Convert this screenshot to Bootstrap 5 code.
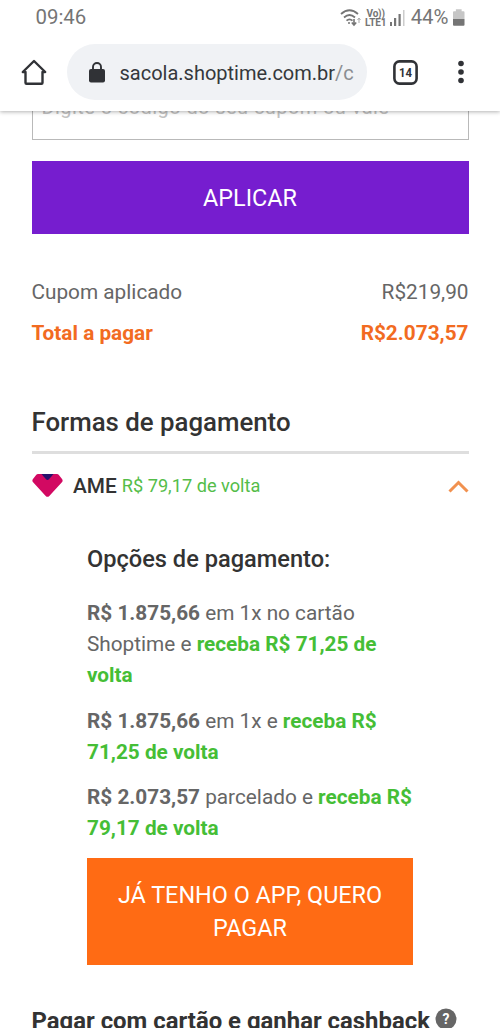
<!DOCTYPE html>
<html lang="pt-BR">
<head>
<meta charset="utf-8">
<meta name="viewport" content="width=device-width, initial-scale=1">
<title>Sacola - Shoptime</title>
<link href="https://cdn.jsdelivr.net/npm/bootstrap@5.3.0/dist/css/bootstrap.min.css" rel="stylesheet">
<style>
body{font-family:Roboto,"Liberation Sans",sans-serif;color:#666;height:1028px;overflow:hidden;background:#fff}
.topo{height:111px;z-index:5;box-shadow:0 1px 4px rgba(0,0,0,.3)}
.status{height:35px;padding:0 34px 0 35.5px;color:#757575;font-size:20.4px;line-height:35px}
.volte{font-size:10px;line-height:9px;font-weight:700;width:22px;letter-spacing:-.2px}
.barra{height:74px;padding:0 31px 0 20.5px}
.endereco{width:300px;height:56px;background:#f0f2f5;font-size:20px;line-height:32px;color:#35383c;margin-left:20.5px;padding-left:22px}
.endereco i{font-style:normal;color:#8b8e92}
.conteudo{width:437px;margin-left:31.5px}
.cupom{height:75px;margin-top:-46px;border:1.5px solid #b9b9b9;padding:0 9px;font-size:20px;letter-spacing:.42px;color:#c2c2c2;line-height:82px;white-space:nowrap}
.acao{border:0;border-radius:0;color:#fff;font-size:23.4px;line-height:33px}
.acao:hover{color:#fff}
.roxo,.roxo:hover{background:#761dcf;height:73px;margin-top:21px;padding-top:7px}
.laranja,.laranja:hover{background:#ff6b14;height:107px;margin-top:-1px;padding-top:8px}
.linha{font-size:20.78px;line-height:42px}
.total{color:#f26b21;font-weight:700;line-height:41px}
.titulo{font-size:25.8px;line-height:30px;color:#333;font-weight:500;margin:53px 0 14px}
.regua{height:3px;background:#dedede}
.ame{font-size:20.8px;color:#333;font-weight:500;height:64px}
.opcoes{width:326px;margin-left:55.5px}
.sub{font-size:23.6px;line-height:30px;font-weight:500;color:#333;margin:26px 0 24px}
.opcao{font-size:20.78px;line-height:31px;margin:0 0 14.6px;white-space:nowrap}
.opcao b{color:#666}
.opcao .verde{color:#45be36}
.verde{color:#54bd49}
.cash{font-size:23.9px;line-height:30px;font-weight:700;color:#333;margin-top:41px;white-space:nowrap}
</style>
</head>
<body>
<header class="topo bg-white position-relative">
  <div class="status d-flex align-items-center">
    <span>09:46</span>
    <svg class="ms-auto" width="22" height="19" viewBox="0 0 22 19" fill="none" stroke="#757575" stroke-width="1.8"><path d="M1 6Q9.500-1.500 18 6M4 9.500Q9.500 4.500 15 9.500M6.500 12.700Q9.500 10 12.500 12.700"/><circle cx="9" cy="15" r="1" fill="#757575" stroke="none"/><path d="M14 11v6M11.800 14.500l2.200 2.500 2.200-2.500" stroke-width="1.600"/><path d="M19 15V10M17.500 12l1.500-2 1.500 2" stroke="#aaa" stroke-width="1"/></svg>
    <span class="volte text-center" style="margin-left:3px"><span class="d-block">Vo))</span><span class="d-block">LTE1</span></span>
    <svg style="margin-left:3px" width="15" height="17" viewBox="0 0 15 17" fill="#757575"><path d="M0 13h2v4H0zM4 9h2.200v8H4zM8.500 5h2.200v12H8.500z"/><path d="M13 1h1.500v16H13z" fill="#ccc"/></svg>
    <span style="margin-left:6px">44%</span>
    <svg style="margin-left:4.500px;margin-right:1.500px" width="11.500" height="17" viewBox="0 0 12 17"><path d="M3 0h6v2h2q1 0 1 1v7H0V3q0-1 1-1h2z" fill="#c6c6c6"/><path d="M0 10h12v6q0 1-1 1H1q-1 0-1-1z" fill="#757575"/></svg>
  </div>
  <nav class="barra d-flex align-items-center">
    <svg width="26" height="26" viewBox="0 0 26 26" fill="none" stroke="#303236" stroke-width="2.400" stroke-linejoin="round"><path d="M1.800 13 13 2 24.200 13H21.500v10.700q0 1-1 1H5.500q-1 0-1-1V13z"/></svg>
    <div class="endereco rounded-pill d-flex align-items-center">
      <svg width="16" height="21" viewBox="0 0 16 21"><path d="M4 8V5a4 4 0 0 1 8 0v3" fill="none" stroke="#303236" stroke-width="1.900"/><rect y="7" width="16" height="13.500" rx="2" fill="#303236"/></svg>
      <span style="margin-left:14.500px;padding-top:2px">sacola.shoptime.com.br<i>/c</i></span>
    </div>
    <svg style="margin-left:26px" width="25" height="25" viewBox="0 0 25 25"><rect x="1.400" y="1.400" width="22.200" height="22.200" rx="5" fill="none" stroke="#303236" stroke-width="2.600"/><text x="12.500" y="17" text-anchor="middle" font-size="12.500" font-weight="700" textLength="13" lengthAdjust="spacingAndGlyphs" fill="#303236">14</text></svg>
    <svg class="ms-auto" style="margin-right:5px" width="6" height="24" viewBox="0 0 6 24" fill="#303236"><circle cx="3" cy="3.500" r="2.800"/><circle cx="3" cy="12" r="2.800"/><circle cx="3" cy="20.500" r="2.800"/></svg>
  </nav>
</header>
<main class="conteudo">
  <div class="cupom">Digite o código do seu cupom ou vale</div>
  <button class="btn acao roxo w-100">APLICAR</button>
  <div style="margin-top:37px" class="linha d-flex justify-content-between"><span>Cupom aplicado</span><span>R$219,90</span></div>
  <div class="linha total d-flex justify-content-between"><span>Total a pagar</span><span>R$2.073,57</span></div>
  <h2 class="titulo">Formas de pagamento</h2>
  <div class="regua"></div>
  <div class="ame d-flex align-items-center">
    <svg style="margin-top:-2px" width="31" height="25" viewBox="0 0 31 25"><path d="M6 1h19q1 0 1.700.8l3.500 4.500q1 1.700-.3 3L17.300 23q-1.800 1.700-3.600 0L1.100 9.300q-1.300-1.300-.3-3L4.300 1.800Q5 1 6 1z" fill="#d20962"/><path d="M9.500 1h12L17 6.300q-1.500 1.200-3 0z" fill="#27116b"/></svg>
    <span style="margin-left:10.500px;padding-top:1px">AME</span>
    <span class="verde fw-normal" style="font-size:18.200px;margin-left:5px">R$ 79,17 de volta</span>
    <svg class="ms-auto" width="21" height="14" viewBox="0 0 21 14" fill="none" stroke="#f1914f" stroke-width="3"><path d="M1.500 12.500l9-9 9 9"/></svg>
  </div>
  <section class="opcoes">
    <h3 class="sub">Opções de pagamento:</h3>
    <p class="opcao"><b>R$ 1.875,66</b> em 1x no cartão<br>Shoptime e <b class="verde">receba R$ 71,25 de<br>volta</b></p>
    <p class="opcao"><b>R$ 1.875,66</b> em 1x e <b class="verde">receba R$<br>71,25 de volta</b></p>
    <p class="opcao"><b>R$ 2.073,57</b> parcelado e <b class="verde">receba R$<br>79,17 de volta</b></p>
    <button class="btn acao laranja w-100">JÁ TENHO O APP, QUERO<br>PAGAR</button>
  </section>
  <div class="cash d-flex">Pagar com cartão e ganhar cashback
    <svg style="margin-left:5px;margin-top:2px" width="22" height="22" viewBox="0 0 22 22"><circle cx="11" cy="11" r="10.500" fill="#666"/><text x="11" y="16" text-anchor="middle" font-size="14" font-weight="700" fill="#fff">?</text></svg>
  </div>
</main>
<script src="https://cdn.jsdelivr.net/npm/bootstrap@5.3.0/dist/js/bootstrap.bundle.min.js"></script>
</body>
</html>
